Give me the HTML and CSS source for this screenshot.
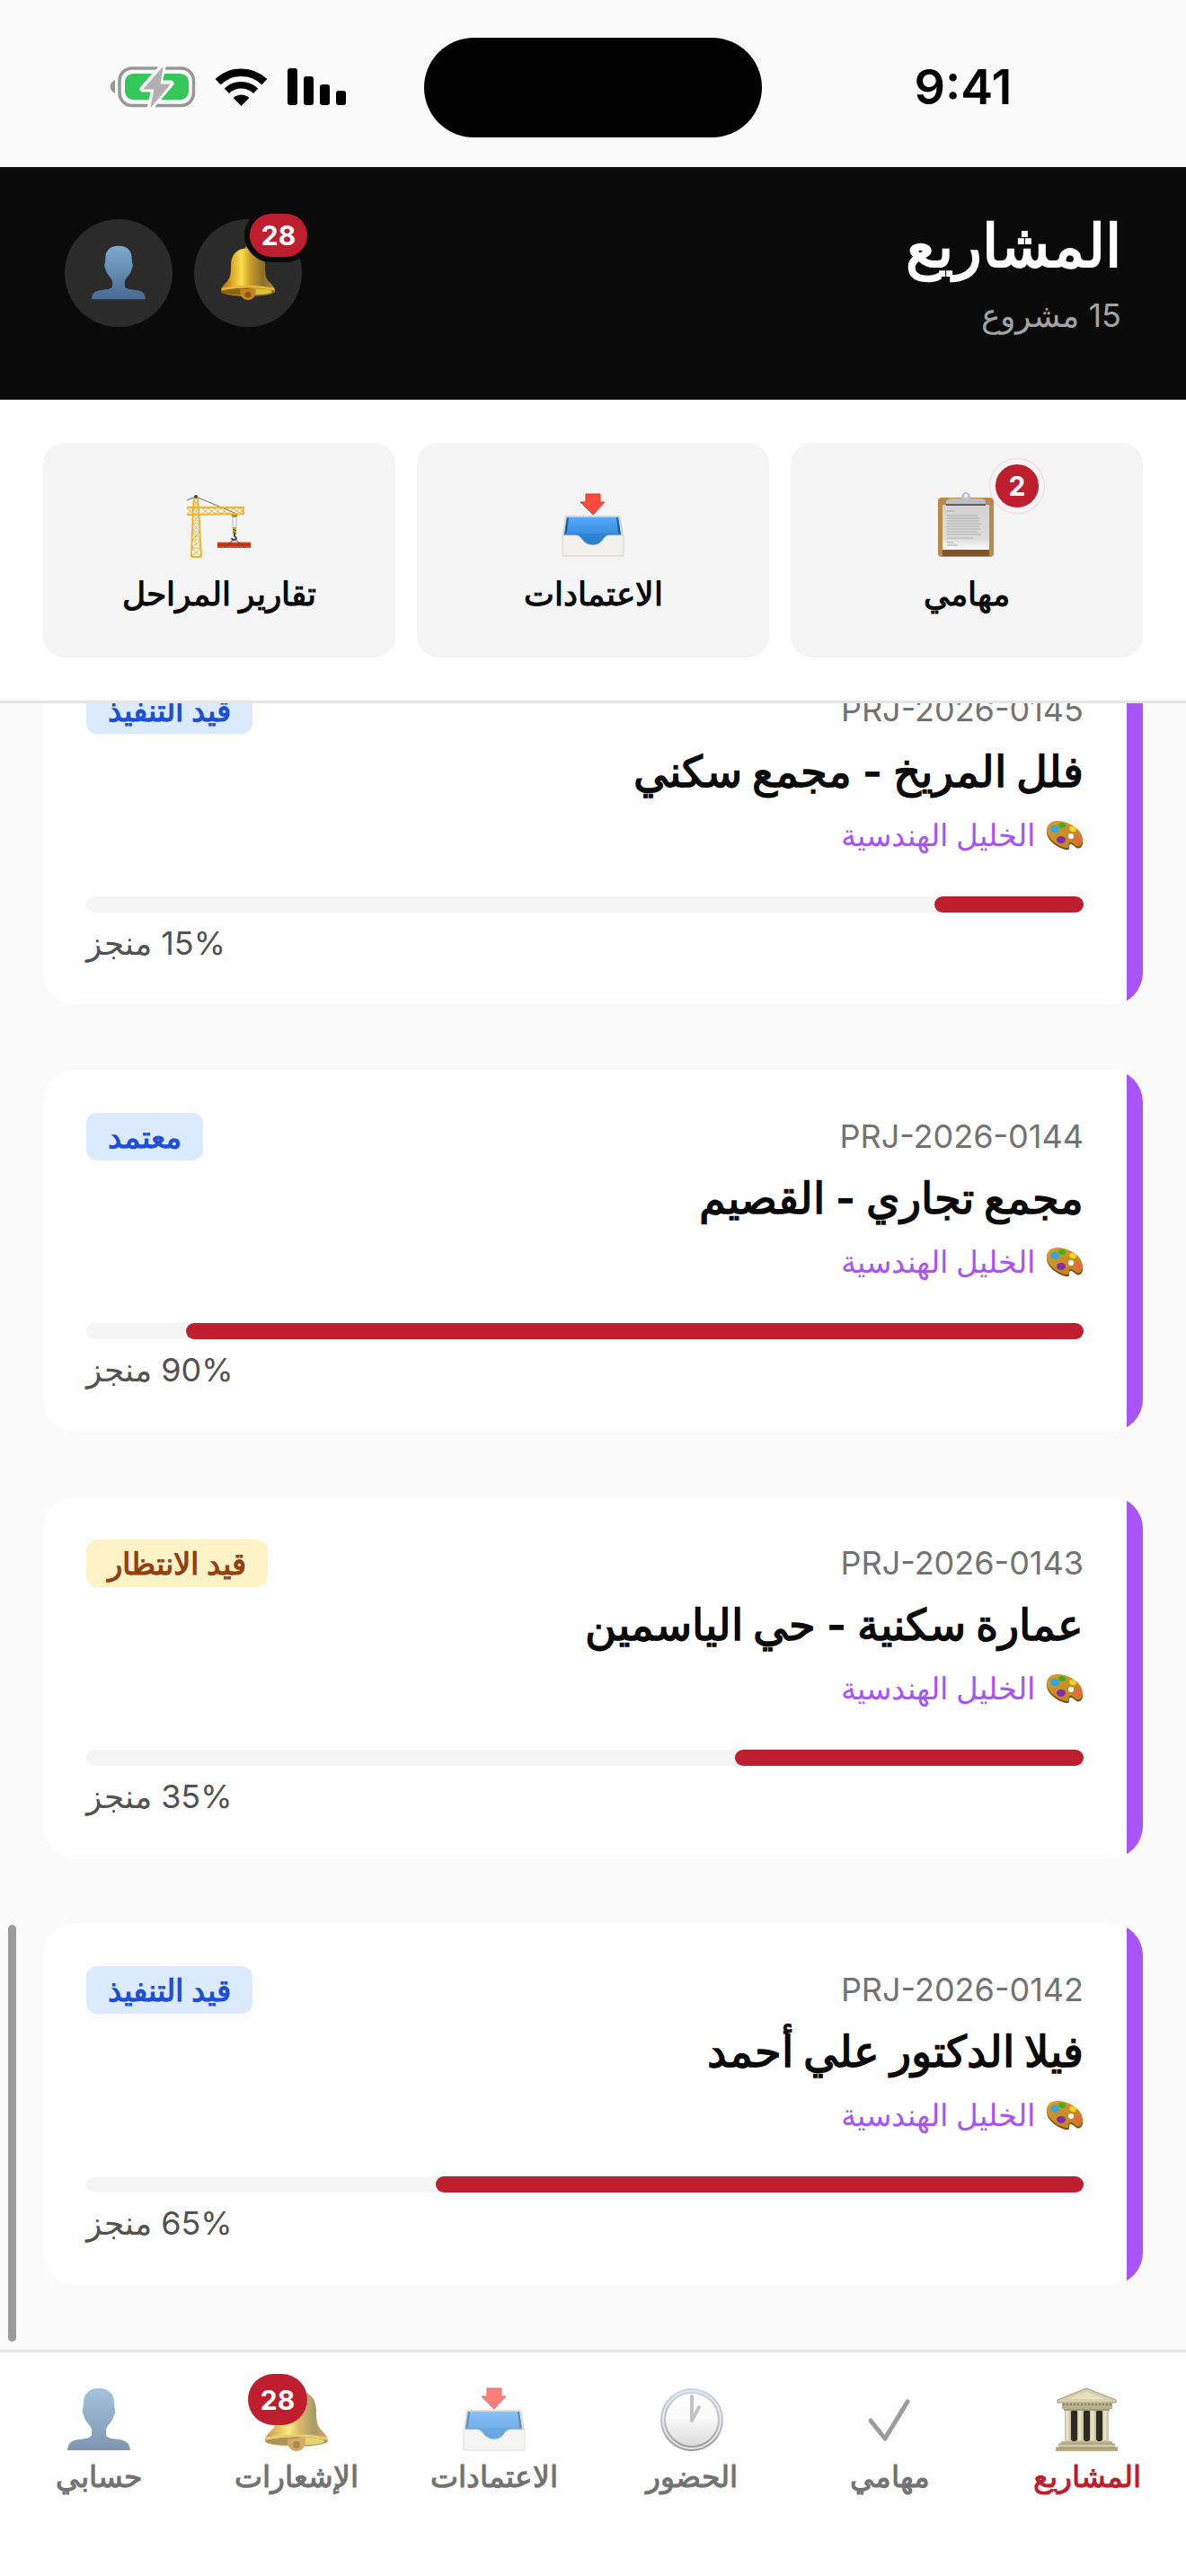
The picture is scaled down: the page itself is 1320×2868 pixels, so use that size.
FILE: index.html
```html
<!DOCTYPE html>
<html lang="ar" dir="rtl">
<head>
    <meta charset="utf-8">
    <meta name="viewport" content="width=device-width, initial-scale=1">
    <title>المشاريع</title>
    <link rel="stylesheet" href="styles.css">
</head>
<body>
    <!-- shared icons -->
    <svg class="sprite" aria-hidden="true">
        <defs>
            <linearGradient id="g-person" x1="0" y1="0" x2="0" y2="1">
                <stop offset="0" stop-color="#7fabcd"/>
                <stop offset="1" stop-color="#476a92"/>
            </linearGradient>
            <linearGradient id="g-bell" x1="0" y1="0" x2="1" y2="0">
                <stop offset="0" stop-color="#a8690f"/>
                <stop offset="0.2" stop-color="#dba522"/>
                <stop offset="0.38" stop-color="#fbe04e"/>
                <stop offset="0.55" stop-color="#c99c2a"/>
                <stop offset="0.78" stop-color="#87702c"/>
                <stop offset="1" stop-color="#b98a1e"/>
            </linearGradient>
            <linearGradient id="g-tray" x1="0" y1="0" x2="0" y2="1">
                <stop offset="0" stop-color="#57a8fb"/>
                <stop offset="0.55" stop-color="#3a8ee0"/>
                <stop offset="0.56" stop-color="#2b86d4"/>
                <stop offset="1" stop-color="#2a7fca"/>
            </linearGradient>
            <linearGradient id="g-paper" x1="0" y1="0" x2="0" y2="1">
                <stop offset="0" stop-color="#d3d3d3"/>
                <stop offset="0.75" stop-color="#dcdcdc"/>
                <stop offset="1" stop-color="#fbfbfb"/>
            </linearGradient>
            <linearGradient id="g-rim" x1="0" y1="0" x2="0" y2="1">
                <stop offset="0" stop-color="#b4c4d6"/>
                <stop offset="0.5" stop-color="#a9a9ab"/>
                <stop offset="1" stop-color="#6c6c6c"/>
            </linearGradient>
            <linearGradient id="g-face" x1="0" y1="0" x2="0" y2="1">
                <stop offset="0" stop-color="#ffffff"/>
                <stop offset="0.5" stop-color="#f7f7f7"/>
                <stop offset="1" stop-color="#cccccc"/>
            </linearGradient>
            <linearGradient id="g-wood" x1="0" y1="0" x2="1" y2="1">
                <stop offset="0" stop-color="#d99a2e"/>
                <stop offset="1" stop-color="#c07e22"/>
            </linearGradient>
        </defs>
        <symbol id="i-person" viewBox="0 0 72 72">
            <path fill="url(#g-person)" d="M36 1C24 1 19 8 19 17L18.500 23Q16.500 26 19 31C21 39 27 42 28 47V52C28 56 23 57 18 57.500C6 58.500 2 61 1 70H71C70 61 66 58.500 54 57.500C49 57 44 56 44 52V47C45 42 51 39 53 31Q55.500 26 53.500 23L53 17C53 8 48 1 36 1Z"/>
        </symbol>
        <symbol id="i-bell" viewBox="0 0 72 72">
            <circle cx="36" cy="5" r="4" fill="#c48a1c"/>
            <path fill="url(#g-bell)" d="M36 4C22 4 15 11 14 24C14 38 13 43 8 48C4 52 1 55 1 60C8 68 64 68 71 60C71 55 68 52 64 48C59 43 58 38 58 24C57 11 50 4 36 4Z"/>
            <ellipse cx="36" cy="60" rx="34" ry="5" fill="#8a6516"/>
            <ellipse cx="48" cy="60" rx="19" ry="4" fill="#dcc23a"/>
            <path d="M2 57Q36 50 70 57" fill="none" stroke="#e6b93a" stroke-width="3"/>
            <path fill="#c3861e" d="M26 57H46C47 66 42 71 36 71C30 71 25 66 26 57Z"/>
            <circle cx="36" cy="64" r="4" fill="#8a560f"/>
        </symbol>
        <symbol id="i-inbox" viewBox="0 0 72 72">
            <path fill="#d2d1cb" d="M5 25H66L70 47H2Z"/>
            <path fill="url(#g-tray)" d="M7 27H64L67 47L60 60H12L4 47Z"/>
            <path fill="#1d5f9f" d="M7 27L9 27L7 44L4 47ZM64 27L62 27L64 44L67 47Z"/>
            <path fill="#ff4a40" stroke="#d8362d" stroke-width="1" d="M28 1H44V10H49L36 24L22 10H28Z"/>
            <path fill="#f2f1ee" stroke="#d3d2cd" stroke-width="1" d="M2 47H17C24 47 24 58 36 58C47 58 47 47 54 47H70V69Q70 70 69 70H3Q2 70 2 69Z"/>
        </symbol>
        <symbol id="i-palette" viewBox="0 0 42 42">
            <path fill="#7b4d12" d="M1 17C1 10 6 6 13 6C24 6 40 14 41 27C42 33 38 37 34 35C31 33 29 30 27 31C25 32 27 36 25 37C19 38 1 29 1 17Z"/>
            <path fill="url(#g-wood)" d="M1 15C1 9 6 5 13 5C24 5 40 13 41 25C41 31 38 35 34 33C31 31 29 28 27 29C24 30 27 34 25 35C19 36 1 27 1 15Z"/>
            <circle cx="28" cy="22" r="3" fill="#ffffff"/>
            <ellipse cx="10" cy="14" rx="5" ry="4" transform="rotate(25 10 14)" fill="#2ea8e0"/>
            <ellipse cx="18" cy="10" rx="4" ry="3" fill="#35b41f"/>
            <ellipse cx="30" cy="14" rx="4" ry="3" transform="rotate(25 30 14)" fill="#f5d327"/>
            <ellipse cx="36" cy="25" rx="4" ry="3" transform="rotate(50 36 25)" fill="#f0634a"/>
            <ellipse cx="17" cy="26" rx="5" ry="4" fill="#7d2fae"/>
        </symbol>
    </svg>

    <div class="status-bar">
        <div class="time" dir="ltr">9:41</div>
        <div class="island"></div>
        <div class="status-icons">
            <svg width="65" height="42" viewBox="0 0 65 42">
                <rect x="0" y="0" width="11" height="41" rx="3"/>
                <rect x="18" y="9" width="11" height="32" rx="3"/>
                <rect x="36" y="18" width="11" height="23" rx="3"/>
                <rect x="54" y="25" width="11" height="16" rx="3"/>
            </svg>
            <svg width="57" height="42" viewBox="0 0 57 42">
                <path d="M2.600 15.200A37.300 37.300 0 0 1 54.400 15.200" fill="none" stroke="#000" stroke-width="8.700"/>
                <path d="M12.300 25.200A23.300 23.300 0 0 1 44.700 25.200" fill="none" stroke="#000" stroke-width="7.500"/>
                <path d="M28.500 42L19.700 33A12.700 12.700 0 0 1 37.300 33Z"/>
            </svg>
            <svg width="94" height="46" viewBox="0 0 94 46">
                <rect x="10" y="2" width="82.500" height="41.500" rx="14" fill="none" stroke="#979797" stroke-width="3.500"/>
                <path d="M5 15V30C-2 27 -2 18 5 15Z" fill="#979797"/>
                <rect x="16" y="8" width="71" height="29" rx="9" fill="#35c75a"/>
                <path d="M58 0L36 25H49L44 46L67 19H54Z" fill="#fafafa" stroke="#fafafa" stroke-width="7" stroke-linejoin="round"/>
                <path d="M58 1L37 25H49L45 45L66 20H55Z" fill="#b0b0b0" stroke="#b0b0b0" stroke-width="1" stroke-linejoin="round"/>
            </svg>
        </div>
    </div>

    <header class="header">
        <div>
            <h1>المشاريع</h1>
            <p class="subtitle">15 مشروع</p>
        </div>
        <div class="header-actions">
            <button class="round-btn" aria-label="الإشعارات">
                <svg class="round-icon"><use href="#i-bell"/></svg>
                <span class="badge badge-header">28</span>
            </button>
            <button class="round-btn" aria-label="حسابي">
                <svg class="round-icon"><use href="#i-person"/></svg>
            </button>
        </div>
    </header>

    <section class="quick">
        <button class="tile">
            <span class="icon-wrap">
                <svg class="icon" viewBox="0 0 72 72">
                    <rect x="4" y="5" width="62" height="66" rx="4" fill="#b98a4a"/>
                    <rect x="9" y="62" width="52" height="8" fill="#7c562a"/>
                    <rect x="9" y="13" width="52" height="50" fill="url(#g-paper)"/>
                    <path d="M13 14V9Q14 6 19 6H51Q56 6 57 9V14Z" fill="#b9bfc6"/>
                    <path d="M13 12H57V14H13Z" fill="#6a5a55"/>
                    <circle cx="35" cy="4" r="5" fill="#b9c4cf"/>
                    <circle cx="35" cy="3" r="2" fill="#f5f5f5"/>
                    <path d="M14 20H22M14 25H48M14 28H50M14 31H49M14 34H52M14 37H50M14 40H51M14 43H48M14 46H52M14 50H43M14 55H21M14 58H26" stroke="#aaaaaa" stroke-width="1"/>
                </svg>
                <span class="badge badge-tile">2</span>
            </span>
            مهامي
        </button>
        <button class="tile">
            <span class="icon-wrap"><svg class="icon"><use href="#i-inbox"/></svg></span>
            الاعتمادات
        </button>
        <button class="tile">
            <span class="icon-wrap">
                <svg class="icon" viewBox="0 0 72 72" fill="none">
                    <path d="M0 8L10 4L53 22" stroke="#6b6b6b" stroke-width="1"/>
                    <path d="M0 16H63V23L0 24" stroke="#f0b52c" stroke-width="2"/>
                    <path d="M0 17L7 23M0 23L7 17M17 17L24 23L31 17L38 23L45 17L52 23L59 17L63 22M17 23L24 17L31 23L38 17L45 23L52 17L59 22L63 17" stroke="#f0b52c" stroke-width="1"/>
                    <path d="M8 6L7 16L5 71M12 6L13 16L16 71M5 71H16" stroke="#f0b52c" stroke-width="2"/>
                    <path d="M8 8L13 16M12 8L7 16M7 16L14 25M13 16L7 25M7 25H14L6 34H15L6 43H15L6 52H16L5 61H16L5 71M7 25L15 34M6 34L15 43M6 43L16 52M6 52L16 61M5 61L16 71" stroke="#f0b52c" stroke-width="1"/>
                    <circle cx="10" cy="4" r="2" fill="#4b4632"/>
                    <path d="M49 24H57L55 27H51Z" fill="#b88a1e"/>
                    <path d="M51 26V39M55 26V39" stroke="#bcbcbc" stroke-width="1"/>
                    <rect x="51" y="38" width="4" height="7" fill="#c9a90e"/>
                    <path d="M51 40L55 42M51 43L55 45" stroke="#4b4632" stroke-width="1"/>
                    <path d="M53 45V48Q57 51 53 52Q50 52 50 50" stroke="#444444" stroke-width="2"/>
                    <rect x="34" y="55" width="37" height="6" fill="#c8320f"/>
                    <path d="M34 55H71M34 60H71" stroke="#d9694f" stroke-width="1"/>
                    <path d="M53 51L41 61M53 51L65 61" stroke="#5b4a45" stroke-width="1"/>
                </svg>
            </span>
            تقارير المراحل
        </button>
    </section>

    <main class="list">
        <article class="card">
            <div class="card-top">
                <span class="code" dir="ltr">PRJ-2026-0145</span>
                <span class="status status-blue">قيد التنفيذ</span>
            </div>
            <h2>فلل المريخ - مجمع سكني</h2>
            <p class="company"><svg class="palette"><use href="#i-palette"/></svg>الخليل الهندسية</p>
            <div class="bar"><div class="fill" style="width: 15%"></div></div>
            <p class="percent">15% منجز</p>
        </article>
        <article class="card">
            <div class="card-top">
                <span class="code" dir="ltr">PRJ-2026-0144</span>
                <span class="status status-blue">معتمد</span>
            </div>
            <h2>مجمع تجاري - القصيم</h2>
            <p class="company"><svg class="palette"><use href="#i-palette"/></svg>الخليل الهندسية</p>
            <div class="bar"><div class="fill" style="width: 90%"></div></div>
            <p class="percent">90% منجز</p>
        </article>
        <article class="card">
            <div class="card-top">
                <span class="code" dir="ltr">PRJ-2026-0143</span>
                <span class="status status-yellow">قيد الانتظار</span>
            </div>
            <h2>عمارة سكنية - حي الياسمين</h2>
            <p class="company"><svg class="palette"><use href="#i-palette"/></svg>الخليل الهندسية</p>
            <div class="bar"><div class="fill" style="width: 35%"></div></div>
            <p class="percent">35% منجز</p>
        </article>
        <article class="card">
            <div class="card-top">
                <span class="code" dir="ltr">PRJ-2026-0142</span>
                <span class="status status-blue">قيد التنفيذ</span>
            </div>
            <h2>فيلا الدكتور علي أحمد</h2>
            <p class="company"><svg class="palette"><use href="#i-palette"/></svg>الخليل الهندسية</p>
            <div class="bar"><div class="fill" style="width: 65%"></div></div>
            <p class="percent">65% منجز</p>
        </article>
        <div class="scroll-thumb"></div>
    </main>

    <nav class="tabs">
        <a href="#projects" class="tab active">
            <span class="icon-wrap">
                <svg class="icon" viewBox="0 0 72 72">
                    <path fill="#d8d0ac" stroke="#9d9672" stroke-width="1" d="M35 1L68 14V17H3V14Z"/>
                    <path fill="#e6dfc0" d="M35 5L56 13H14Z"/>
                    <rect x="8" y="17" width="56" height="7" fill="#b9b18b"/>
                    <path d="M9 19H63" stroke="#857e5e" stroke-width="2" stroke-dasharray="2 2"/>
                    <rect x="11" y="24" width="49" height="36" fill="#cfc8a6"/>
                    <rect x="18" y="25" width="7" height="35" rx="3" fill="#2f2a20"/>
                    <rect x="32" y="25" width="7" height="35" rx="3" fill="#2f2a20"/>
                    <rect x="46" y="25" width="7" height="35" rx="3" fill="#2f2a20"/>
                    <path d="M14 26V59M28 26V59M42 26V59M56 26V59" stroke="#e8e2c6" stroke-width="3"/>
                    <path d="M10 25H61" stroke="#a39b76" stroke-width="2"/>
                    <rect x="7" y="60" width="57" height="3" fill="#bdb58f"/>
                    <rect x="4" y="63" width="63" height="4" fill="#d3cba5"/>
                    <rect x="1" y="67" width="69" height="4" fill="#b3ab84"/>
                    <path d="M1 67H70M4 63H67" stroke="#958d68" stroke-width="1"/>
                </svg>
            </span>
            المشاريع
        </a>
        <a href="#tasks" class="tab">
            <span class="icon-wrap">
                <svg class="icon" viewBox="0 0 72 72">
                    <path d="M15 37L31 57L56 16" fill="none" stroke="#727272" stroke-width="5" stroke-linecap="round" stroke-linejoin="round"/>
                </svg>
            </span>
            مهامي
        </a>
        <a href="#attendance" class="tab">
            <span class="icon-wrap">
                <svg class="icon" viewBox="0 0 72 72">
                    <circle cx="36" cy="36" r="35" fill="url(#g-rim)"/>
                    <circle cx="36" cy="36" r="32" fill="none" stroke="#d9dfe6" stroke-width="2"/>
                    <circle cx="36" cy="36" r="29" fill="url(#g-face)"/>
                    <path d="M36 10V37L44 22" fill="none" stroke="#a9a9ab" stroke-width="4" stroke-linecap="round" stroke-linejoin="round"/>
                </svg>
            </span>
            الحضور
        </a>
        <a href="#approvals" class="tab">
            <span class="icon-wrap"><svg class="icon"><use href="#i-inbox"/></svg></span>
            الاعتمادات
        </a>
        <a href="#notifications" class="tab">
            <span class="icon-wrap">
                <svg class="icon"><use href="#i-bell"/></svg>
                <span class="badge badge-tab">28</span>
            </span>
            الإشعارات
        </a>
        <a href="#account" class="tab">
            <span class="icon-wrap"><svg class="icon"><use href="#i-person"/></svg></span>
            حسابي
        </a>
    </nav>
</body>
</html>
```
FILE: styles.css
```css
* {
    box-sizing: border-box;
    margin: 0;
    padding: 0;
}

body {
    display: flex;
    flex-direction: column;
    height: 100vh;
    background-color: #fafafa;
    color: #0a0a0a;
    font-family: Inter, sans-serif;
    font-size: 36px;
    line-height: 45px;
}

button {
    border: none;
    font: inherit;
    color: inherit;
    cursor: pointer;
}

a {
    text-decoration: none;
}

svg {
    display: block;
    overflow: visible;
}

.sprite {
    position: absolute;
    width: 0;
    height: 0;
}

/* status bar */
.status-bar {
    display: grid;
    grid-template-columns: 1fr 376px 1fr;
    align-items: center;
    justify-items: center;
    flex: none;
    height: 186px;
    padding: 8px 24px 0;
}

.time {
    color: #000;
    font-size: 54px;
    font-weight: 600;
    line-height: 60px;
}

.island {
    width: 100%;
    height: 111px;
    border-radius: 56px;
    background-color: #000;
}

.status-icons {
    display: flex;
    align-items: center;
    gap: 23px;
    padding-left: 12px;
}

/* header */
.header {
    display: flex;
    justify-content: space-between;
    align-items: center;
    flex: none;
    padding: 48px 72px 72px;
    background-color: #0a0a0a;
    color: #fff;
}

h1 {
    margin-bottom: 18px;
    font-size: 66px;
    font-weight: 700;
    line-height: 78px;
}

.subtitle {
    color: #a3a3a3;
    line-height: 43px;
}

.header-actions {
    display: flex;
    gap: 24px;
}

.round-btn {
    display: flex;
    justify-content: center;
    align-items: center;
    position: relative;
    width: 120px;
    height: 120px;
    border-radius: 50%;
    background-color: #2b2b2b;
}

.round-icon {
    width: 62px;
    height: 62px;
}

.badge {
    display: flex;
    justify-content: center;
    align-items: center;
    position: absolute;
    border-radius: 30px;
    background-color: #be1e2d;
    color: #fff;
    font-size: 30px;
    font-weight: 700;
    line-height: 36px;
}

.badge-header {
    top: -12px;
    right: -12px;
    width: 76px;
    height: 60px;
    border: 6px solid #0a0a0a;
}

.badge-tile {
    top: -38px;
    right: -50px;
    width: 60px;
    height: 60px;
    border: 6px solid #f5f5f5;
    box-shadow: 0 0 0 1px #f0d5d7;
}

.badge-tab {
    top: -15px;
    left: -18px;
    width: 66px;
    height: 57px;
}

/* quick actions */
.quick {
    display: grid;
    grid-template-columns: repeat(3, 1fr);
    gap: 24px;
    flex: none;
    padding: 48px;
    background-color: #fff;
    border-bottom: 3px solid #e5e5e5;
}

.tile {
    display: flex;
    flex-direction: column;
    align-items: center;
    gap: 18px;
    padding: 56px 24px 48px;
    border-radius: 24px;
    background-color: #f5f5f5;
    font-weight: 600;
}

.icon-wrap {
    position: relative;
}

.icon {
    width: 72px;
    height: 72px;
}

/* project list, scrolled to the end */
.list {
    display: flex;
    flex-direction: column;
    justify-content: flex-end;
    gap: 72px;
    position: relative;
    flex: 1;
    min-height: 0;
    padding: 0 48px 72px;
    overflow: hidden;
}

.card {
    flex: none;
    padding: 48px 66px 46px 48px;
    border-radius: 36px;
    background: linear-gradient(to left, #a855f7 18px, #fff 18px);
}

.card-top {
    display: flex;
    justify-content: space-between;
    align-items: center;
    margin-bottom: 12px;
}

.code {
    color: #737373;
}

.status {
    padding: 4px 24px;
    border-radius: 12px;
    font-size: 34px;
    font-weight: 600;
}

.status-blue {
    background-color: #dbeafe;
    color: #1d4ed8;
}

.status-yellow {
    background-color: #fef3c7;
    color: #92400e;
}

h2 {
    margin-bottom: 18px;
    font-size: 48px;
    font-weight: 700;
    line-height: 60px;
}

.company {
    display: flex;
    align-items: center;
    gap: 12px;
    margin-bottom: 46px;
    color: #a855f7;
    font-size: 34px;
    font-weight: 500;
}

.palette {
    width: 42px;
    height: 42px;
}

.bar {
    height: 18px;
    margin-bottom: 12px;
    border-radius: 9px;
    background-color: #f5f5f5;
}

.fill {
    height: 100%;
    border-radius: 9px;
    background-color: #be1e2d;
}

.percent {
    color: #525252;
    text-align: left;
}

.scroll-thumb {
    position: absolute;
    left: 9px;
    bottom: 9px;
    width: 9px;
    height: 464px;
    border-radius: 5px;
    background-color: #9c9c9c;
}

/* bottom tabs */
.tabs {
    display: grid;
    grid-template-columns: repeat(6, 1fr);
    flex: none;
    padding: 39px 0 90px;
    background-color: #fff;
    border-top: 3px solid #e5e5e5;
}

.tab {
    display: flex;
    flex-direction: column;
    align-items: center;
    gap: 6px;
    color: #737373;
    font-size: 33px;
    font-weight: 600;
    line-height: 42px;
}

.tab .icon {
    opacity: 0.7;
}

.tab.active {
    color: #be1e2d;
    font-weight: 700;
}

.tab.active .icon {
    opacity: 1;
}
```
